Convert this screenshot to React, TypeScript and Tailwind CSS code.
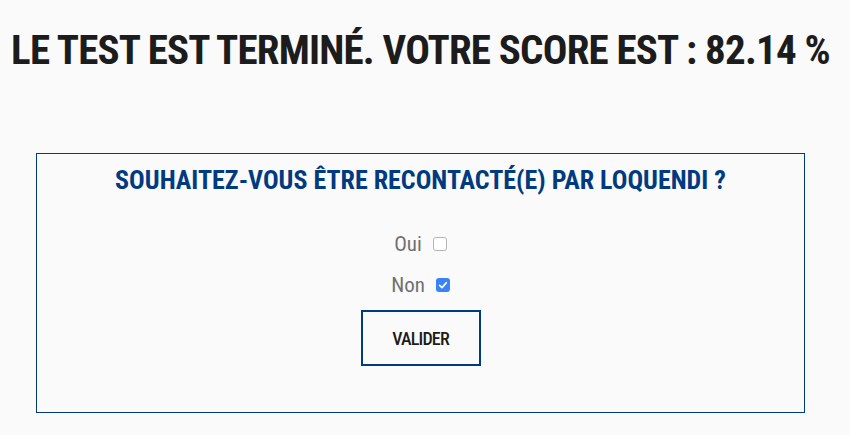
export default function App() {
  return (
    <div className="min-h-[435px] w-full bg-[#fafafa] font-['Roboto_Condensed','Roboto',sans-serif]">
      <div className="w-[841px]">
        <h1 className="pt-[25px] text-center text-[41px] leading-[50px] font-bold tracking-[-0.8px] text-[#1c1c1c] whitespace-nowrap">
          LE TEST EST TERMINÉ. VOTRE SCORE EST : 82.14 %
        </h1>

        <div className="mt-[78px] mx-[36px] h-[260px] border border-[#003a80] flex flex-col items-center">
          <h2 className="mt-[10px] text-[26px] leading-[32px] font-bold text-[#003a80] whitespace-nowrap">
            SOUHAITEZ-VOUS ÊTRE RECONTACTÉ(E) PAR LOQUENDI ?
          </h2>

          <div className="mt-[36px] flex flex-col items-center gap-[17px]">
            <label className="flex items-center gap-[11px] text-[21px] leading-[24px] text-[#707070]">
              Oui
              <span className="w-[14px] h-[14px] rounded-[3px] border border-[#b5b5b5] bg-white" />
            </label>
            <label className="flex items-center gap-[11px] text-[21px] leading-[24px] text-[#707070]">
              Non
              <span className="w-[14px] h-[14px] rounded-[3px] bg-[#3b82f6] flex items-center justify-center">
                <svg viewBox="0 0 14 14" className="w-[14px] h-[14px]">
                  <path d="M3.6 7.3 L6 9.6 L10.4 4.6" fill="none" stroke="white" strokeWidth="1.6" strokeLinecap="round" strokeLinejoin="round" />
                </svg>
              </span>
            </label>
          </div>

          <button className="mt-[13px] w-[120px] h-[56px] border-2 border-[#003a80] text-[18px] font-medium tracking-[-0.8px] text-[#1c1c1c]">
            VALIDER
          </button>
        </div>
      </div>
    </div>
  );
}
